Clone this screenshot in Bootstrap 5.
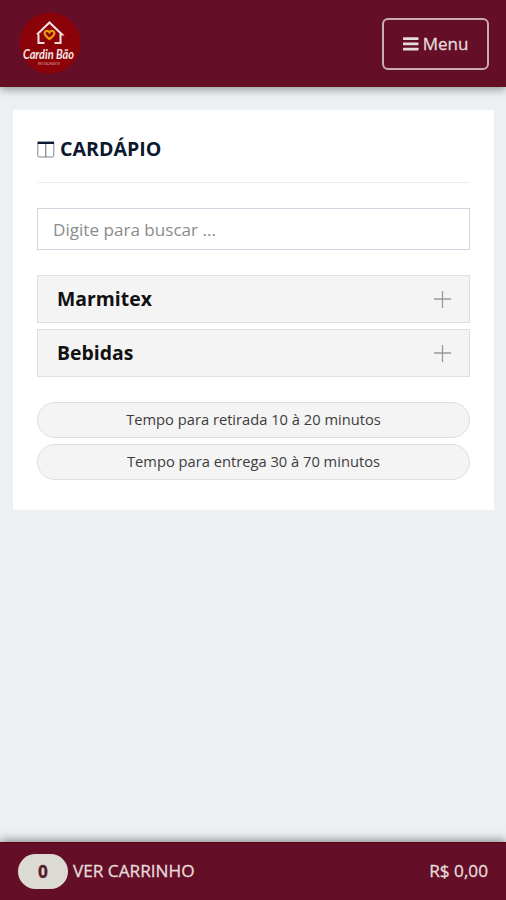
<!DOCTYPE html>
<html lang="pt-BR">
<head>
<meta charset="utf-8">
<meta name="viewport" content="width=device-width, initial-scale=1">
<title>Cardápio</title>
<link href="https://cdn.jsdelivr.net/npm/bootstrap@5.3.0/dist/css/bootstrap.min.css" rel="stylesheet">
<style>
body{font-family:"Open Sans",sans-serif;background:#ecf0f3;height:900px;overflow:hidden}
.bar{background:#640e27;color:#e6dcda;-webkit-text-stroke:.3px currentColor}
.bar svg{-webkit-text-stroke:0}
.topbar{height:87px;padding:2px 17px 0 18px;border-bottom:1px solid #681014;box-shadow:0 2px 9px rgba(0,0,0,.42)}
.menu-btn,.menu-btn:hover{width:107px;height:52px;border:2px solid #c9adb0;border-radius:6px;color:#e6dcda;font-size:17px;padding:0;gap:4px}
.panel{margin:23px 12px 0 13px;height:400px;padding:0 24px;background:#fff}
.title{height:73px;padding-top:6px;margin-bottom:25px;border-bottom:1px solid #eeeef0;color:#0c1830;font-size:19.6px;gap:5px}
.search,.search:focus{height:42px;border:1.5px solid #d5d4e3;padding:0 15px;font-size:17.1px;color:#555;margin-bottom:25px;box-shadow:none}
.search::placeholder{color:#8b8b8b;opacity:1}
.category{height:48px;background:#f4f4f4;border:1px solid #dfdfdf;color:#111;font-size:19.4px;padding:0 18px 0 19px}
.categories{gap:6px;margin-bottom:25px}
.times{gap:6px}
.time{height:36px;background:#f4f4f4;border:1px solid #dedede;color:#3d3d3d;font-size:14.7px;padding-bottom:2px}
.cart{height:58px;padding:0 18px;border-top:1px solid #590510;box-shadow:0 -2px 9px rgba(0,0,0,.42);font-size:17.2px}
.cart-label{gap:5px}
.cart-text{padding-bottom:1px}
.count{width:50px;height:35px;background:#dcdbd3;color:#591c2d}
</style>
<script src="https://cdn.jsdelivr.net/npm/bootstrap@5.3.0/dist/js/bootstrap.bundle.min.js"></script>
</head>
<body class="d-flex flex-column">
<header class="bar topbar d-flex align-items-center justify-content-between flex-shrink-0">
  <a href="#" class="d-block lh-1" aria-label="Início">
    <svg width="64" height="64" viewBox="0 0 64 64" overflow="visible">
      <circle cx="32" cy="31" r="30.5" fill="#8b0308"/>
      <path d="M19 22.500 31.500 10.500 44 22.500H42.500V31H36.500M26.500 31H20.500V22.500" fill="none" stroke="#f2dfdd" stroke-width="2.100"/>
      <path d="M31.500 27C28 24.500 26.300 23.100 26.600 20.900c.5-2.600 3.700-2.500 4.900-.5 1.200-2 4.400-2.100 4.900.5.300 2.200-1.400 3.600-4.900 6.100z" fill="#8b0308" stroke="#e89a0b" stroke-width="2.200"/>
      <g fill="#f6e9e7" text-anchor="middle">
        <text x="30.500" y="46.500" font-family="Lato, sans-serif" font-style="italic" font-weight="700" font-size="14" textLength="51" lengthAdjust="spacingAndGlyphs">Cardin Bão</text>
        <text x="31" y="53" font-family="Lato, sans-serif" font-size="4" textLength="22" lengthAdjust="spacingAndGlyphs" fill="#d39c98">RESTAURANTE</text>
      </g>
    </svg>
  </a>
  <button type="button" class="btn menu-btn d-flex align-items-center justify-content-center">
    <svg width="16" height="14" viewBox="0 0 16 14" fill="#e6dcda"><rect y=".3" width="15.500" height="2.700" rx=".6"/><rect y="5.500" width="15.500" height="2.700" rx=".6"/><rect y="10.700" width="15.500" height="2.700" rx=".6"/></svg>
    <span>Menu</span>
  </button>
</header>
<main class="flex-grow-1">
  <section class="panel">
    <h1 class="title d-flex align-items-center fw-bold">
      <svg width="18" height="17" viewBox="0 0 18 17"><rect x=".8" y="1.500" width="16" height="14.500" rx="1.500" fill="none" stroke="#85868b"/><path d="M8.800 3v13" stroke="#66676d"/><path d="M.5 1.800h16.600" stroke="#0c1830" stroke-width="2.400"/></svg>
      <span>CARDÁPIO</span>
    </h1>
    <input type="text" class="form-control rounded-0 search" placeholder="Digite para buscar ...">
    <div class="categories d-flex flex-column">
      <button class="category d-flex align-items-center justify-content-between fw-bold w-100"><span>Marmitex</span>
        <svg width="17" height="17" viewBox="0 0 17 17"><path d="M0 8h17M8.500 0v17" stroke="#999" stroke-width="1.300"/></svg></button>
      <button class="category d-flex align-items-center justify-content-between fw-bold w-100"><span>Bebidas</span>
        <svg width="17" height="17" viewBox="0 0 17 17"><path d="M0 8h17M8.500 0v17" stroke="#999" stroke-width="1.300"/></svg></button>
    </div>
    <div class="times d-flex flex-column">
      <div class="time rounded-pill d-flex align-items-center justify-content-center">Tempo para retirada 10 à 20 minutos</div>
      <div class="time rounded-pill d-flex align-items-center justify-content-center">Tempo para entrega 30 à 70 minutos</div>
    </div>
  </section>
</main>
<footer class="bar cart d-flex align-items-center justify-content-between flex-shrink-0">
  <div class="d-flex align-items-center cart-label">
    <span class="count rounded-pill d-flex align-items-center justify-content-center fw-bold">0</span>
    <span class="cart-text">VER CARRINHO</span>
  </div>
  <span class="cart-text">R$ 0,00</span>
</footer>
</body>
</html>
